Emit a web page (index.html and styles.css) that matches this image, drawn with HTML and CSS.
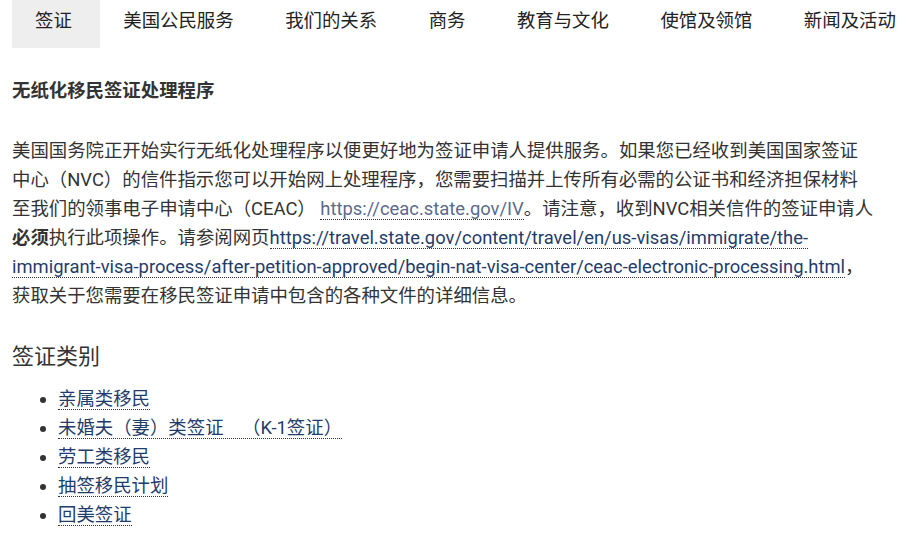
FILE: index.html
```html
<!DOCTYPE html>
<html lang="zh-CN">
<head>
    <meta charset="UTF-8">
    <meta name="viewport" content="width=device-width, initial-scale=1.0">
    <title>签证</title>
    <link rel="stylesheet" href="styles.css">
</head>
<body>
    <nav class="tabs">
        <a class="tab active" href="#">签证</a>
        <a class="tab" href="#">美国公民服务</a>
        <a class="tab" href="#">我们的关系</a>
        <a class="tab" href="#">商务</a>
        <a class="tab" href="#">教育与文化</a>
        <a class="tab" href="#">使馆及领馆</a>
        <a class="tab" href="#">新闻及活动</a>
    </nav>
    <main class="content">
        <h4 class="title">无纸化移民签证处理程序</h4>
        <p class="intro">美国国务院正开始实行无纸化处理程序以便更好地为签证申请人提供服务。如果您已经收到美国国家签证中心（NVC）的信件指示您可以开始网上处理程序，您需要扫描并上传所有必需的公证书和经济担保材料至我们的领事电子申请中心（CEAC） <a class="link visited" href="#">https://ceac.state.gov/IV</a>。请注意，收到NVC相关信件的签证申请人<strong>必须</strong>执行此项操作。请参阅网页<a class="link" href="#">https://travel.state.gov/content/travel/en/us-visas/immigrate/the-immigrant-visa-process/after-petition-approved/begin-nat-visa-center/ceac-electronic-processing.html</a>，获取关于您需要在移民签证申请中包含的各种文件的详细信息。</p>
        <h3 class="section">签证类别</h3>
        <ul class="types">
            <li><a class="link" href="#">亲属类移民</a></li>
            <li><a class="link" href="#">未婚夫（妻）类签证 <span class="alias">（K-1签证）</span></a></li>
            <li><a class="link" href="#">劳工类移民</a></li>
            <li><a class="link" href="#">抽签移民计划</a></li>
            <li><a class="link" href="#">回美签证</a></li>
        </ul>
    </main>
</body>
</html>
```

FILE: styles.css
```css
/* Embassy page - visa section */
body {
    font-family: Roboto, "Noto Sans CJK SC", sans-serif;
    margin: 0;
    padding: 0 12px;
    background-color: #FFFFFF;
    color: #333333;
    font-size: 18.4px;
}

.tabs {
    display: flex;
    height: 48px;
}

.tab {
    display: flex;
    align-items: center;
    padding: 0 28.5px 10px 23px;
    color: #222222;
    text-decoration: none;
    font-size: 18.4px;
    white-space: nowrap;
}

.tab.active {
    background-color: #EEEEEE; /* current section */
}

.content {
    width: 862px;
}

.title {
    font-size: 18.4px;
    font-weight: bold;
    margin: 28px 0 0;
    line-height: 30px;
}

.intro {
    margin: 30px 0 0;
    line-height: 29px;
}

.intro strong {
    font-weight: bold;
}

.link {
    color: #1F3C6B;
    text-decoration: none;
    border-bottom: 1px dotted #333333;
}

.link.visited {
    color: #5B6A8A; /* visited link */
}

.alias {
    margin-left: 14px;
}

.section {
    font-size: 22px;
    font-weight: normal;
    margin: 31px 0 0;
    line-height: 32px;
}

.types {
    margin: 11px 0 0;
    padding-left: 46px;
    line-height: 29px;
}
```
